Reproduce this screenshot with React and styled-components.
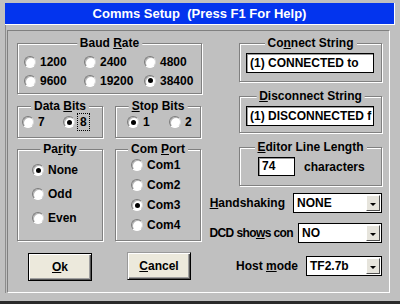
import React from 'react'
import styled, { createGlobalStyle } from 'styled-components'

const GlobalStyle = createGlobalStyle`
  html, body {
    margin: 0;
    padding: 0;
    background: #c0c0c0;
  }
  body {
    font-family: "Liberation Sans", Arial, sans-serif;
    font-weight: 700;
    font-size: 12px;
    color: #000;
  }
`

const Window = styled.div`
  width: 400px;
  height: 304px;
  box-sizing: border-box;
  padding: 3px 0 0 5px;
  background: #c0c0c0;
  border-bottom: 3px solid #2a2a2a;
  overflow: hidden;
`

const TitleBar = styled.div`
  width: 389px;
  height: 21px;
  background: #0334ee;
  border-right: 1px solid #fff;
  border-bottom: 1px solid #fff;
  color: #fff;
  font-size: 13px;
  display: flex;
  align-items: center;
  justify-content: center;
  white-space: pre;
`

const Client = styled.div`
  width: 384px;
  height: 268px;
  box-sizing: border-box;
  padding-top: 5px;
  border-left: 1px solid #8c8c8c;
`

const Panel = styled.div`
  margin-left: 1px;
  width: 383px;
  height: 263px;
  box-sizing: border-box;
  border-top: 1px solid #808080;
  border-left: 1px solid #808080;
  border-right: 1px solid #fff;
  border-bottom: 1px solid #fff;
  padding: 12px 0 0 9px;
  display: flex;
  gap: 9px;
`

const LeftCol = styled.div`
  width: 185px;
  display: flex;
  flex-direction: column;
`

const RightCol = styled.div`
  width: 171px;
  display: flex;
  flex-direction: column;
  align-items: flex-end;
`

const Group = styled.div`
  position: relative;
  box-sizing: border-box;
  width: ${({ $w }) => $w}px;
  height: ${({ $h }) => $h}px;
  margin-top: ${({ $mt }) => $mt || 0}px;
  border: 1px solid #808080;
  box-shadow: inset 1px 1px 0 #fff, 1px 1px 0 #fff;
  padding: ${({ $pad }) => $pad || '0'};
`

const Caption = styled.span`
  position: absolute;
  top: -8px;
  left: 50%;
  transform: translateX(-50%);
  padding: 0 3px;
  line-height: 14px;
  background: #c0c0c0;
  white-space: nowrap;
`

const Key = styled.span`
  text-decoration: underline;
  text-underline-offset: 1px;
`

const Pair = styled.div`
  display: flex;
  gap: 12px;
  margin-top: ${({ $mt }) => $mt}px;
`

const RadioGrid = styled.div`
  display: grid;
  grid-template-columns: repeat(${({ $cols }) => $cols}, ${({ $cw }) => $cw}px);
  grid-auto-rows: ${({ $rh }) => $rh}px;
`

const RadioItem = styled.label`
  display: flex;
  align-items: center;
  gap: 4px;
  white-space: nowrap;
`

const Circle = styled.span`
  flex: none;
  width: 12px;
  height: 12px;
  box-sizing: border-box;
  border-radius: 50%;
  background: #fff;
  border: 1px solid;
  border-color: #7a7a7a #d8d8d8 #fff #7a7a7a;
  box-shadow: inset 1px 1px 0 #b4b4b4;
  display: flex;
  align-items: center;
  justify-content: center;

  &::after {
    content: '';
    width: 5px;
    height: 5px;
    border-radius: 50%;
    background: #000;
    display: ${({ $on }) => ($on ? 'block' : 'none')};
  }
`

const Focus = styled.span`
  outline: 1px dotted #000;
  outline-offset: 1px;
  padding: 0 1px;
`

const Radio = ({ on, children }) => (
  <RadioItem>
    <Circle $on={on} />
    {children}
  </RadioItem>
)

const ButtonRow = styled.div`
  display: flex;
  align-items: flex-start;
  gap: 35px;
  margin-top: 12px;
  padding-left: 11px;
`

const Button = styled.button`
  width: 64px;
  height: 28px;
  margin-top: ${({ $default }) => ($default ? 0 : -1)}px;
  font: inherit;
  color: #000;
  background: #ece9dc;
  border: 1px solid #000;
  border-color: ${({ $default }) => ($default ? '#000' : '#9a9a9a #000 #000 #9a9a9a')};
  box-shadow: inset 1px 1px 0 #fff, inset -1px -1px 0 #555, inset -2px -2px 0 #a0a0a0;
  padding: 0;
`

const Field = styled.div`
  box-sizing: border-box;
  width: ${({ $w }) => $w}px;
  height: ${({ $h }) => $h}px;
  background: #fff;
  border: 1px solid #000;
  box-shadow: inset 1px 1px 0 #9a9a9a;
  padding-left: 3px;
  line-height: ${({ $h }) => $h - 2}px;
  white-space: nowrap;
  overflow: hidden;
`

const FieldLine = styled.div`
  display: flex;
  align-items: center;
  gap: 9px;
  padding-left: ${({ $pl }) => $pl}px;
`

const SelectRow = styled.div`
  display: flex;
  justify-content: flex-end;
  align-items: center;
  gap: ${({ $gap }) => $gap || 8}px;
  margin-top: ${({ $mt }) => $mt}px;
  white-space: nowrap;
`

const RowLabel = styled.span`
  letter-spacing: ${({ $tight }) => ($tight ? '-0.6px' : 'normal')};
`

const SelectBox = styled.div`
  box-sizing: border-box;
  width: ${({ $w }) => $w}px;
  height: 20px;
  background: #fff;
  border: 1px solid #000;
  display: flex;
  align-items: center;
  justify-content: space-between;
  padding: 0 1px 0 3px;
`

const DropButton = styled.span`
  box-sizing: border-box;
  width: 14px;
  height: 16px;
  background: #e6e4dc;
  border: 1px solid;
  border-color: #fff #505050 #505050 #fff;
  display: flex;
  align-items: center;
  justify-content: center;

  &::after {
    content: '';
    margin-top: 2px;
    border-left: 3px solid transparent;
    border-right: 3px solid transparent;
    border-top: 3px solid #000;
  }
`

const Select = ({ w, value }) => (
  <SelectBox $w={w}>
    <span>{value}</span>
    <DropButton />
  </SelectBox>
)

export default function App() {
  return (
    <>
      <GlobalStyle />
      <Window>
        <TitleBar>Comms Setup  (Press F1 For Help)</TitleBar>
        <Client>
          <Panel>
            <LeftCol>
              <Group $w={185} $h={51} $pad="8px 0 0 6px">
                <Caption>Baud <Key>R</Key>ate</Caption>
                <RadioGrid $cols={3} $cw={60} $rh={19}>
                  <Radio>1200</Radio>
                  <Radio>2400</Radio>
                  <Radio>4800</Radio>
                  <Radio>9600</Radio>
                  <Radio>19200</Radio>
                  <Radio on>38400</Radio>
                </RadioGrid>
              </Group>

              <Pair $mt={12}>
                <Group $w={86} $h={32} $pad="8px 0 0 4px">
                  <Caption>Data <Key>B</Key>its</Caption>
                  <RadioGrid $cols={2} $cw={41} $rh={14}>
                    <Radio>7</Radio>
                    <Radio on><Focus>8</Focus></Radio>
                  </RadioGrid>
                </Group>
                <Group $w={86} $h={32} $pad="8px 0 0 11px">
                  <Caption><Key>S</Key>top Bits</Caption>
                  <RadioGrid $cols={2} $cw={42} $rh={14}>
                    <Radio on>1</Radio>
                    <Radio>2</Radio>
                  </RadioGrid>
                </Group>
              </Pair>

              <Pair $mt={11}>
                <Group $w={86} $h={92} $pad="8px 0 0 14px">
                  <Caption>Pa<Key>r</Key>ity</Caption>
                  <RadioGrid $cols={1} $cw={70} $rh={24}>
                    <Radio on>None</Radio>
                    <Radio>Odd</Radio>
                    <Radio>Even</Radio>
                  </RadioGrid>
                </Group>
                <Group $w={86} $h={92} $pad="5px 0 0 15px">
                  <Caption>Com <Key>P</Key>ort</Caption>
                  <RadioGrid $cols={1} $cw={70} $rh={20}>
                    <Radio>Com1</Radio>
                    <Radio>Com2</Radio>
                    <Radio on>Com3</Radio>
                    <Radio>Com4</Radio>
                  </RadioGrid>
                </Group>
              </Pair>

              <ButtonRow>
                <Button $default><Key>O</Key>k</Button>
                <Button><Key>C</Key>ancel</Button>
              </ButtonRow>
            </LeftCol>

            <RightCol>
              <Group $w={143} $h={39} $pad="9px 0 0 6px">
                <Caption>Co<Key>n</Key>nect String</Caption>
                <Field $w={128} $h={20}>(1) CONNECTED to</Field>
              </Group>
              <Group $w={143} $h={37} $mt={14} $pad="9px 0 0 6px">
                <Caption><Key>D</Key>isconnect String</Caption>
                <Field $w={128} $h={20}>(1) DISCONNECTED f</Field>
              </Group>
              <Group $w={143} $h={39} $mt={14} $pad="9px 0 0 0">
                <Caption><Key>E</Key>ditor Line Length</Caption>
                <FieldLine $pl={18}>
                  <Field $w={37} $h={19}>74</Field>
                  <span>characters</span>
                </FieldLine>
              </Group>

              <SelectRow $mt={7}>
                <RowLabel><Key>H</Key>andshaking</RowLabel>
                <Select w={89} value="NONE" />
              </SelectRow>
              <SelectRow $mt={10} $gap={5}>
                <RowLabel $tight>DCD sho<Key>w</Key>s con</RowLabel>
                <Select w={84} value="NO" />
              </SelectRow>
              <SelectRow $mt={13}>
                <RowLabel>Host <Key>m</Key>ode</RowLabel>
                <Select w={76} value="TF2.7b" />
              </SelectRow>
            </RightCol>
          </Panel>
        </Client>
      </Window>
    </>
  )
}
